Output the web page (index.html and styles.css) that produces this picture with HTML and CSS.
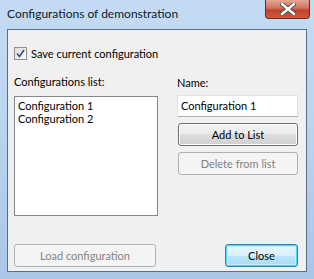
FILE: index.html
```html
<!DOCTYPE html>
<html>
<head>
    <title>Configurations of demonstration</title>
    <link rel="stylesheet" href="styles.css">
</head>
<body>
    <div class="window">
        <div class="titlebar">
            <span class="title">Configurations of demonstration</span>
            <div class="close-x">
                <svg width="16" height="12" viewBox="0 0 16 12">
                    <path d="M2 1 L14 11 M14 1 L2 11" stroke="#4a4a4a" stroke-width="4.5" stroke-linecap="round"/>
                    <path d="M2 1 L14 11 M14 1 L2 11" stroke="#ffffff" stroke-width="2.6" stroke-linecap="round"/>
                </svg>
            </div>
        </div>

        <div class="client">
            <label class="check-row">
                <span class="checkbox">
                    <svg width="9" height="9" viewBox="0 0 9 9">
                        <path d="M1 4.5 L3.5 7.5 L8 1" fill="none" stroke="#2b4d92" stroke-width="1.6"/>
                    </svg>
                </span>
                Save current configuration
            </label>

            <div class="columns">
                <div class="left-col">
                    <div class="label">Configurations list:</div>
                    <div class="listbox">
                        <div>Configuration 1</div>
                        <div>Configuration 2</div>
                    </div>
                </div>
                <div class="right-col">
                    <div class="label">Name:</div>
                    <div class="textbox">Configuration 1</div>
                    <div class="btn">Add to List</div>
                    <div class="btn disabled">Delete from list</div>
                </div>
            </div>

            <div class="footer">
                <div class="btn disabled load">Load configuration</div>
                <div class="btn default close">Close</div>
            </div>
        </div>
    </div>
</body>
</html>
```

FILE: styles.css
```css
body {
    margin: 0;
    font-family: Lato, "Open Sans", sans-serif;
    font-size: 11px;
    color: #000;
}
.window {
    width: 314px;
    height: 279px;
    box-sizing: border-box;
    padding: 0 8px 7px 8px;
    background: linear-gradient(180deg, #c4dbf3 0%, #bcd5f0 40%, #a9c6e8 100%);
    display: flex;
    flex-direction: column;
}
.titlebar {
    height: 29px;
    display: flex;
    align-items: flex-start;
    position: relative;
}
.title {
    margin: 6px 0 0 -1px;
    font-size: 12px;
    color: #0d1b2e;
}
.close-x {
    position: absolute;
    right: -4px;
    top: 0;
    width: 45px;
    height: 19px;
    box-sizing: border-box;
    border: 1px solid #6b2a1f;
    border-top: none;
    border-radius: 0 0 4px 4px;
    background: linear-gradient(180deg, #e3a796 0%, #d2735e 45%, #c0432b 55%, #cb5a40 100%);
    display: flex;
    align-items: center;
    justify-content: center;
}
.client {
    flex: 1;
    background: #f0f0f0;
    border: 1px solid #5a6e89;
    margin-left: -1px;
    margin-right: -1px;
    padding: 15px 8px 4px 6px;
    display: flex;
    flex-direction: column;
}
.check-row {
    display: flex;
    align-items: center;
    gap: 4px;
    height: 16px;
}
.checkbox {
    width: 11px;
    height: 11px;
    border: 1px solid #8e8f8f;
    background: linear-gradient(135deg, #dcdcdc, #fbfbfb);
    display: flex;
    align-items: center;
    justify-content: center;
}
.columns {
    display: flex;
    justify-content: space-between;
    margin-top: 12px;
}
.left-col {
    width: 144px;
}
.right-col {
    width: 121px;
    display: flex;
    flex-direction: column;
}
.label {
    height: 16px;
    line-height: 16px;
    margin-bottom: 6px;
}
.left-col .label {
    margin-top: 1px;
}
.right-col .label {
    margin-top: 2px;
    margin-bottom: 4px;
}
.listbox {
    height: 114px;
    background: #fff;
    border: 1px solid #828790;
    padding: 2px 3px;
    line-height: 13px;
}
.textbox {
    height: 20px;
    line-height: 20px;
    background: #fff;
    border: 1px solid #abadb3;
    border-top-color: #e2e3ea;
    border-left-color: #e2e3ea;
    border-right-color: #dbdfe6;
    padding: 0 3px;
}
.btn {
    height: 21px;
    line-height: 21px;
    text-align: center;
    border: 1px solid #707070;
    border-radius: 3px;
    background: linear-gradient(180deg, #f2f2f2 0%, #ebebeb 50%, #dddddd 50%, #cfcfcf 100%);
    box-shadow: inset 0 0 0 1px #fcfcfc;
}
.right-col .btn {
    margin-left: 1px;
    margin-top: 6px;
}
.btn.disabled {
    border-color: #adb2b5;
    background: #f4f4f4;
    box-shadow: none;
    color: #838383;
}
.footer {
    margin-top: auto;
    display: flex;
    justify-content: space-between;
    align-items: center;
}
.load {
    width: 140px;
}
.close {
    width: 71px;
    border-color: #3c7fb1;
    background: linear-gradient(180deg, #eaf6fd 0%, #d9f0fc 50%, #bee6fd 50%, #a7d9f5 100%);
    box-shadow: inset 0 0 0 1px #48d8fb, inset 0 0 0 2px #c6eefc;
}
```
